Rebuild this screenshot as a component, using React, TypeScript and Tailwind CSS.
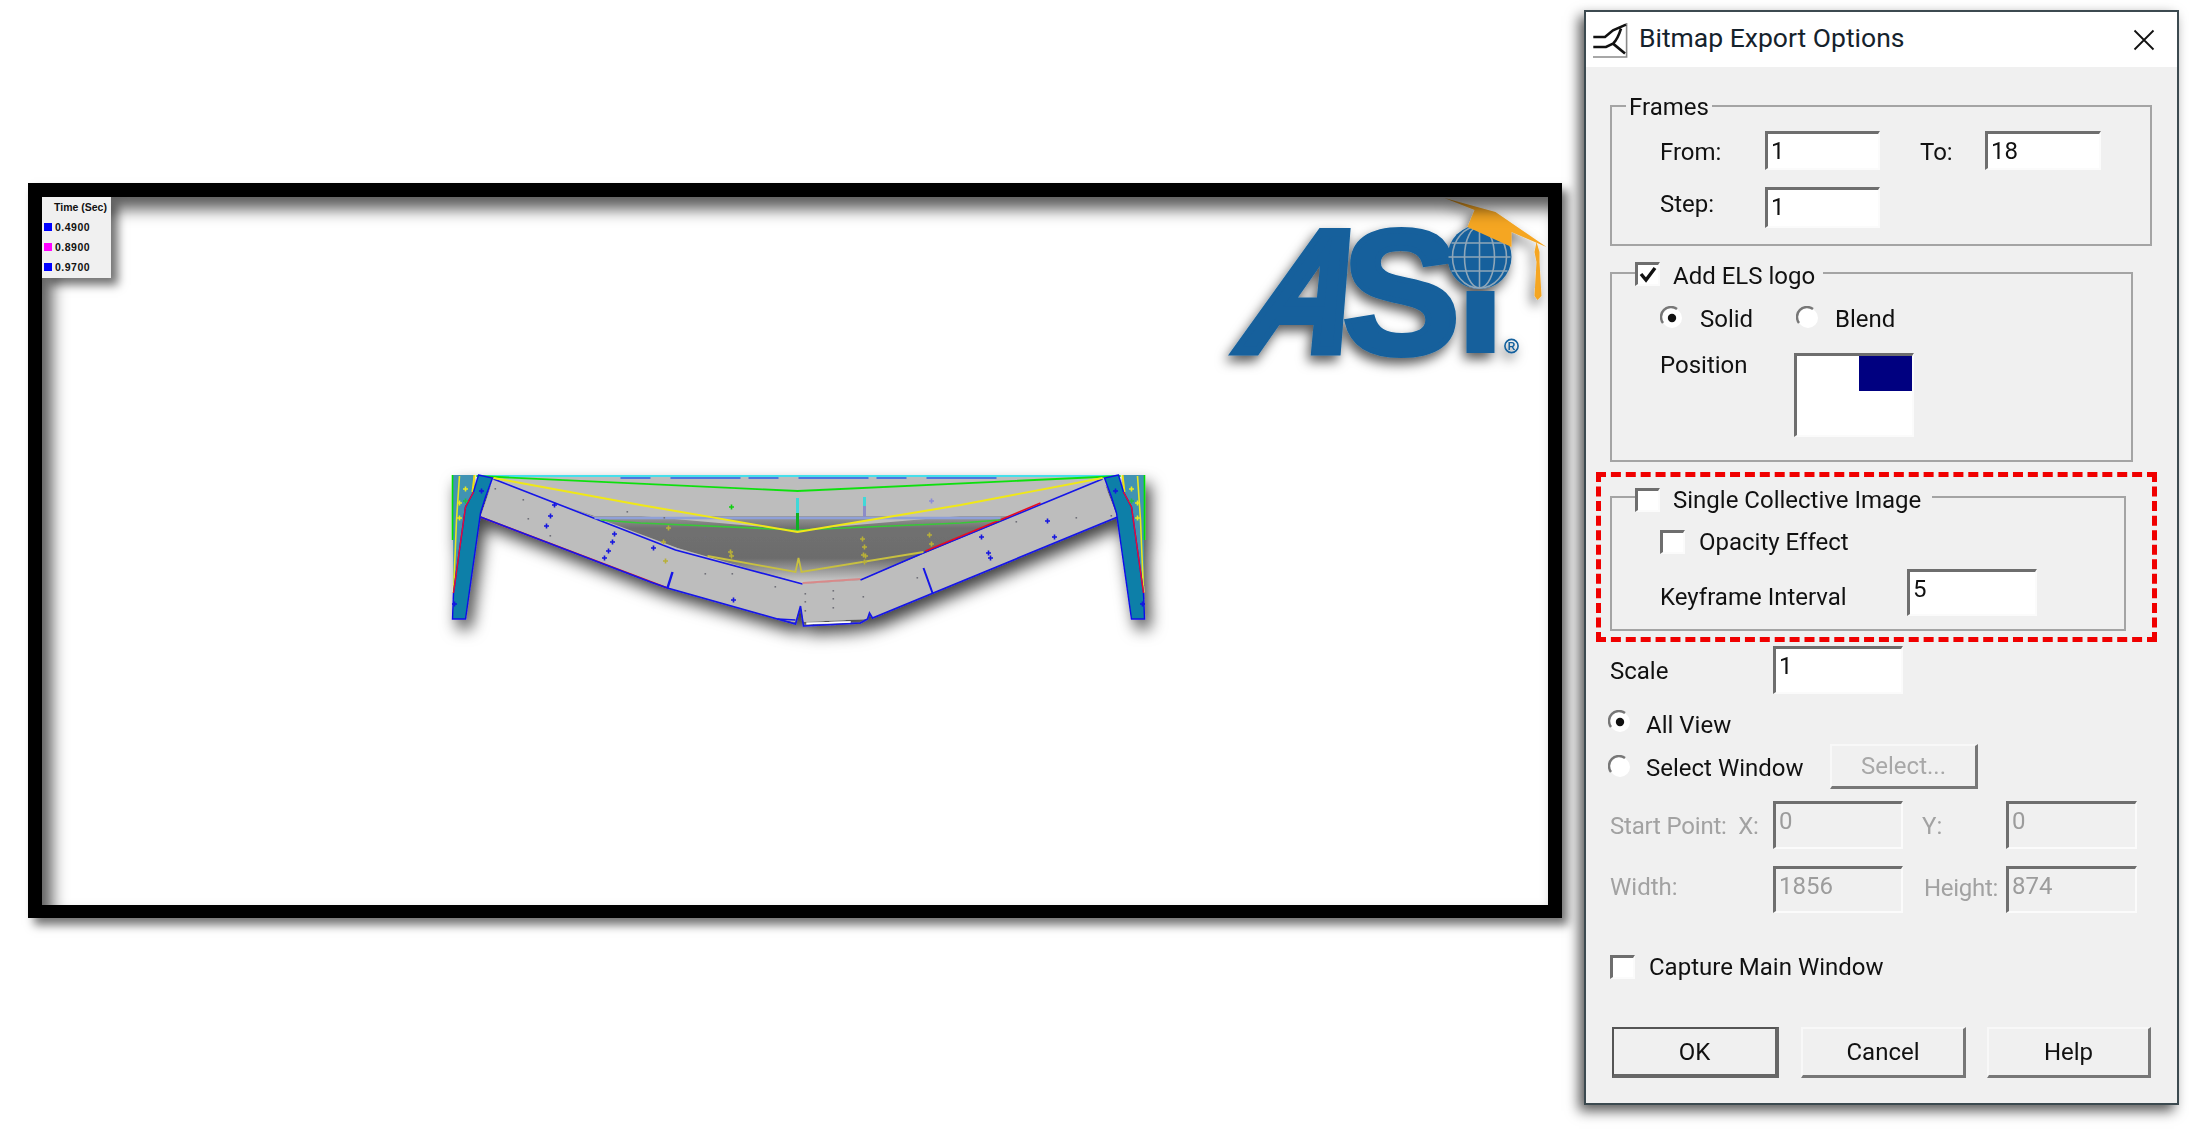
import React from "react";

const sunken = "border-t-[3px] border-l-[3px] border-r-2 border-b-2 border-t-[#6e6e6e] border-l-[#6e6e6e] border-r-[#fbfbfb] border-b-[#fbfbfb]";

function Field({ value, w, h, disabled, className = "" }: { value: string; w: string; h: string; disabled?: boolean; className?: string }) {
  return (
    <div className={`${w} ${h} ${sunken} ${disabled ? "bg-[#f0f0f0] text-[#9c9c9c]" : "bg-white text-[#111]"} pl-[3px] flex items-start shrink-0 leading-[35px] ${className}`}>
      {value}
    </div>
  );
}

function Check({ checked }: { checked?: boolean }) {
  return (
    <div className={`w-[25px] h-[24px] shrink-0 bg-white ${sunken} flex items-center justify-center`}>
      {checked && (
        <svg viewBox="0 0 20 20" className="w-[20px] h-[20px]">
          <path d="M3 9 L8 15 L17 3" fill="none" stroke="#111" strokeWidth="3.4" />
        </svg>
      )}
    </div>
  );
}

function Radio({ on }: { on?: boolean }) {
  return (
    <svg viewBox="0 0 24 24" className="w-[24px] h-[24px] shrink-0">
      <circle cx="12" cy="12" r="10" fill="#fff" />
      <path d="M3 17 A10 10 0 0 1 17 3" fill="none" stroke="#777" strokeWidth="2.4" />
      {on && <circle cx="12" cy="12" r="4.2" fill="#111" />}
    </svg>
  );
}

function Button({ label, w, primary, disabled, h }: { label: string; w: string; h: string; primary?: boolean; disabled?: boolean }) {
  const border = primary
    ? "border-2 border-t-[#555] border-l-[#555] border-r-[4px] border-b-[4px] border-r-[#666] border-b-[#666]"
    : "border-t-2 border-l-2 border-r-[3px] border-b-[3px] border-t-[#f8f8f8] border-l-[#f8f8f8] border-r-[#777] border-b-[#777]";
  return (
    <div className={`${w} ${h} ${border} flex items-center justify-center shrink-0 ${disabled ? "text-[#a8a8a8]" : "text-[#111]"}`}>
      {label}
    </div>
  );
}

function Mark({ x, y, c = "#1414e0" }: { x: number; y: number; c?: string }) {
  return <path d={`M${x - 2.5} ${y} H${x + 2.5} M${x} ${y - 2.5} V${y + 2.5}`} stroke={c} strokeWidth="1.6" />;
}

function Column({ mirror }: { mirror?: boolean }) {
  return (
    <g transform={mirror ? "translate(1596 0) scale(-1 1)" : undefined}>
      <polygon points="452,475 474,475 474,492 465,507 453,593" fill="#3f93b3" />
      <polyline points="452,475 452,540" fill="none" stroke="#00e000" strokeWidth="1.6" />
      <polyline points="459,476 456,520 453,593" fill="none" stroke="#e8e820" strokeWidth="1.6" />
      <polyline points="474,475 472,492" fill="none" stroke="#f0e010" strokeWidth="2" />
      <polygon points="478,475 492,478 485,497 480,513 465,619 452,619 453,593 465,507 473,492" fill="#0a7fa8" stroke="#1010e8" strokeWidth="1.4" />
      <polyline points="473,492 465,507 453,593" fill="none" stroke="#e81030" strokeWidth="1.4" />
      <Mark x={465} y={489} c="#e8e820" />
      <Mark x={459} y={503} c="#e8e820" />
      <Mark x={459} y={518} c="#e8e820" />
      <Mark x={465} y={501} c="#20c040" />
      <Mark x={481} y={491} c="#1414e0" />
      <Mark x={454} y={604} c="#1414e0" />
    </g>
  );
}

function Scene() {
  const blue = [
    [554, 505], [550, 516], [546, 526], [614, 534], [612, 542], [608, 551], [604, 558], [653, 548], [733, 600],
    [1047, 521], [981, 537], [1054, 537], [988, 553], [990, 558],
  ];
  const olive = [
    [668, 528], [663, 542], [665, 561], [730, 552], [731, 556], [862, 539], [864, 547], [863, 555], [864, 562], [865, 556], [929, 535], [931, 544],
  ];
  const dots = [
    [494, 488], [522, 499], [527, 518], [549, 535], [626, 511], [663, 517], [704, 536], [704, 573], [731, 573], [774, 586], [804, 593], [804, 601], [804, 610],
    [832, 590], [832, 598], [832, 607], [862, 596], [1015, 521], [1075, 517], [1110, 515], [916, 577],
  ];
  return (
    <svg viewBox="42 197 1505 708" className="w-full h-full block">
      <defs>
        <filter id="sh" x="-20%" y="-20%" width="140%" height="160%">
          <feDropShadow dx="5" dy="9" stdDeviation="8" floodColor="#000" floodOpacity="0.75" />
        </filter>
        <filter id="shLogo" x="-20%" y="-20%" width="140%" height="140%">
          <feDropShadow dx="-3" dy="6" stdDeviation="6" floodColor="#000" floodOpacity="0.65" />
        </filter>
        <linearGradient id="dark" x1="0" y1="0" x2="0" y2="1">
          <stop offset="0" stopColor="#9a9a9a" />
          <stop offset="0.18" stopColor="#707070" />
          <stop offset="0.62" stopColor="#6c6c6c" />
          <stop offset="0.9" stopColor="#b8b8b8" />
          <stop offset="1" stopColor="#d0d0d0" />
        </linearGradient>
      </defs>

      <g filter="url(#sh)">
        <polygon points="476,477 1120,477 1040,518 600,518" fill="#bdbdbd" />
        <polygon points="590,516 1010,516 925,552 860,580 802,584 677,548" fill="url(#dark)" />
        <polygon points="640,516 797,530 960,516 960,505 797,532 640,505" fill="#bdbdbd" />
        <polygon points="493,479 677,548 802,584 860,580 1102,479 1117,517 872,618 869,613 867,619 803,622 800,606 795,622 777,619 667,588 480,517" fill="#bdbdbd" />
        <polyline points="493,479 675,550 802,584" fill="none" stroke="#1414e8" strokeWidth="1.6" />
        <polyline points="802,583 860,579" fill="none" stroke="#d88a8a" strokeWidth="2" />
        <polyline points="860,580 925,552 1102,479" fill="none" stroke="#1414e8" strokeWidth="1.6" />
        <polyline points="925,551 1040,503" fill="none" stroke="#e81020" strokeWidth="1.6" />
        <polyline points="480,517 667,588" fill="none" stroke="#e81020" strokeWidth="1.6" />
        <polyline points="480,517 650,582 667,588 777,619 795,624 800,606 803,626 860,623 867,619 869,613 872,618 1117,517" fill="none" stroke="#1414e8" strokeWidth="1.6" />
        <polyline points="777,619 795,620 M804,622 866,620" fill="none" stroke="#1414e8" strokeWidth="1.4" />
        <polyline points="806,623.5 850,622" fill="none" stroke="#ffffff" strokeWidth="1.4" />
        <polyline points="667,588 672,572" fill="none" stroke="#1414e8" strokeWidth="2.4" />
        <polyline points="923,568 932,593" fill="none" stroke="#1414e8" strokeWidth="2" />
        <polyline points="476,476 1120,476" fill="none" stroke="#10d8e8" strokeWidth="1.4" />
        <polyline points="476,476 797,491 1120,476" fill="none" stroke="#10e010" strokeWidth="1.8" />
        <polyline points="620,478 1000,478" fill="none" stroke="#2a5ce8" strokeWidth="1.4" strokeDasharray="30 20 70 8" />
        <polyline points="594,518 1000,518" fill="none" stroke="#8fa0d8" strokeWidth="2.4" />
        <polyline points="600,520 640,523 797,530 960,523 1000,520" fill="none" stroke="#38c838" strokeWidth="1.6" />
        <polyline points="493,478 640,505 797,532 960,505 1102,478" fill="none" stroke="#f0e818" strokeWidth="1.8" />
        <polyline points="707,556 795,572 798,558 801,572 923,552" fill="none" stroke="#c8c040" strokeWidth="1.8" />
        <polyline points="797,498 797,530" fill="none" stroke="#40d8d8" strokeWidth="3" />
        <polyline points="797,513 797,530" fill="none" stroke="#10b020" strokeWidth="3" />
        <polyline points="864,497 864,517" fill="none" stroke="#8c8cc8" strokeWidth="3" />
        <polyline points="864,497 864,506" fill="none" stroke="#40d8d8" strokeWidth="3" />
        <Mark x={731} y={507} c="#10d010" />
        <Mark x={931} y={501} c="#8c8cd8" />
        {blue.map(([x, y], i) => <Mark key={i} x={x} y={y} />)}
        {olive.map(([x, y], i) => <Mark key={i} x={x} y={y} c="#b8b038" />)}
        {dots.map(([x, y], i) => <rect key={i} x={x} y={y} width="1.6" height="1.6" fill="#707078" />)}
        <Column />
        <Column mirror />
      </g>

      <g filter="url(#shLogo)">
        <text transform="translate(1231 351) skewX(-21.7) scale(0.86 0.98)" fontFamily="Liberation Sans" fontWeight="700" fontSize="176" fill="#14609c" stroke="#14609c" strokeWidth="9">A</text>
        <text x="1342" y="353" fontFamily="Liberation Sans" fontWeight="700" fontSize="176" fill="#14609c" stroke="#14609c" strokeWidth="6">S</text>
        <rect x="1466" y="291" width="28" height="62" fill="#14609c" />
        <circle cx="1479" cy="257" r="32" fill="#14609c" />
        <g fill="none" stroke="#8fa6b8" strokeWidth="1.6">
          <path d="M1448 257 H1510 M1451 243 H1507 M1451 271 H1507 M1479 226 V288" />
          <ellipse cx="1479" cy="257" rx="15" ry="31" />
          <ellipse cx="1479" cy="257" rx="27" ry="31" />
        </g>
        <polygon points="1444,198 1495,212 1546,247 1511,232 1511,247 1467,227 1474,210" fill="#f5a623" />
        <path d="M1536 242 L1539 252 L1539 262 L1541 296 L1537 300 L1534 296 L1536 262 L1534 252 Z" fill="#f5a623" />
        <circle cx="1511" cy="346" r="6.6" fill="none" stroke="#14609c" strokeWidth="1.6" />
        <text x="1511" y="350" textAnchor="middle" fontFamily="Liberation Sans" fontWeight="700" fontSize="10.5" fill="#14609c">R</text>
      </g>
    </svg>
  );
}

export default function App() {
  return (
    <div className="w-[2189px] h-[1135px] bg-white flex items-start overflow-hidden font-['Roboto',sans-serif] text-[24px] leading-none">
      {/* captured view */}
      <div className="ml-[28px] mt-[183px] w-[1534px] h-[735px] shrink-0 border-[14px] border-b-[13px] border-black shadow-[6px_7px_9px_rgba(0,0,0,0.55)] relative">
        <Scene />
        <div className="absolute inset-0 shadow-[inset_10px_12px_16px_rgba(0,0,0,0.65)] pointer-events-none" />
        <div className="absolute left-0 top-0 w-[69px] h-[81px] bg-[#f0f0f0] shadow-[7px_7px_9px_rgba(0,0,0,0.55)] font-['Liberation_Sans',sans-serif] font-bold text-[10.5px] text-[#111]">
          <div className="flex h-[20px] items-center pl-[12px] whitespace-nowrap">Time (Sec)</div>
          {[["#0000ff", "0.4900"], ["#ff00ff", "0.8900"], ["#0000ff", "0.9700"]].map(([c, t]) => (
            <div key={t} className="flex h-[20px] items-center pl-[2px] gap-[3px] tracking-[0.5px]">
              <span className="w-[8px] h-[8px]" style={{ background: c }} />
              {t}
            </div>
          ))}
        </div>
      </div>

      {/* dialog */}
      <div className="ml-[22px] mt-[10px] w-[595px] h-[1095px] shrink-0 border-2 border-[#3c4a50] bg-[#f0f0f0] shadow-[-5px_6px_12px_rgba(0,0,0,0.65)] text-[#111]">
        <div className="blur-[0.5px]">
          <div className="h-[55px] bg-white flex items-center pl-[6px] pr-[22px]">
            <svg viewBox="0 0 36 36" className="w-[36px] h-[36px] shrink-0">
              <path d="M34.6 1 V35 H1" stroke="#8a8a8a" strokeWidth="1.6" fill="none" />
              <path d="M1.3 15 H13 L21 8.3 L34 2.6 M29 6.6 C27 13 25 18 21 21.6 L33 31.6 M1.3 25 H14 L21 21.6" stroke="#111" strokeWidth="2.6" fill="none" />
            </svg>
            <div className="ml-[11px] flex-1 text-[26.5px] -mt-[3px] text-[#15222c]">Bitmap Export Options</div>
            <svg viewBox="0 0 22 22" className="w-[22px] h-[22px]">
              <path d="M1.5 1.5 L20.5 20.5 M20.5 1.5 L1.5 20.5" stroke="#111" strokeWidth="1.8" />
            </svg>
          </div>

          <div className="pl-[24px]">
            {/* Frames */}
            <div className="relative mt-[38px] w-[542px] h-[141px] border-2 border-[#a4a4a4] pl-[48px] pt-[24px]">
              <div className="absolute left-[14px] top-[-13px] bg-[#f0f0f0] px-[3px] h-[26px] flex items-center">Frames</div>
              <div className="flex items-center">
                <div className="w-[105px] pt-[2px]">From:</div>
                <Field value="1" w="w-[115px]" h="h-[39px]" />
                <div className="ml-[40px] w-[65px] pt-[2px]">To:</div>
                <Field value="18" w="w-[116px]" h="h-[39px]" />
              </div>
              <div className="flex items-center mt-[17px]">
                <div className="w-[105px] pb-[7px]">Step:</div>
                <Field value="1" w="w-[115px]" h="h-[41px]" />
              </div>
            </div>

            {/* Logo */}
            <div className="relative mt-[26px] w-[523px] h-[190px] border-2 border-[#a4a4a4] pl-[48px] pt-[32px]">
              <div className="absolute left-[23px] top-[-12px] bg-[#f0f0f0] pr-[8px] h-[24px] flex items-center gap-[13px]">
                <Check checked />
                <span className="pt-[3px]">Add ELS logo</span>
              </div>
              <div className="flex items-center h-[24px]">
                <Radio on />
                <div className="ml-[16px] w-[96px] pt-[2px]">Solid</div>
                <Radio />
                <div className="ml-[15px] pt-[2px]">Blend</div>
              </div>
              <div className="flex items-start mt-[23px]">
                <div className="w-[134px]">Position</div>
                <div className={`w-[120px] h-[84px] bg-white ${sunken} flex justify-end items-start`}>
                  <div className="w-[53px] h-[35px] bg-[#000080]" />
                </div>
              </div>
            </div>

            {/* Highlighted */}
            <div className="mt-[10px] -ml-[14px] w-[561px] h-[170px] border-[5px] border-dashed border-[#f00000] pl-[9px] pt-[19px]">
              <div className="relative w-[516px] h-[135px] border-2 border-[#a4a4a4] pl-[48px] pt-[32px]">
                <div className="absolute left-[23px] top-[-10px] bg-[#f0f0f0] pr-[11px] h-[24px] flex items-center gap-[13px]">
                  <Check />
                  Single Collective Image
                </div>
                <div className="flex items-center gap-[14px] h-[24px]">
                  <Check />
                  Opacity Effect
                </div>
                <div className="flex items-center mt-[15px]">
                  <div className="w-[247px] pt-[8px]">Keyframe Interval</div>
                  <Field value="5" w="w-[130px]" h="h-[47px]" />
                </div>
              </div>
            </div>

            <div className="flex items-center mt-[4px] h-[48px]">
              <div className="w-[163px] pt-[2px]">Scale</div>
              <Field value="1" w="w-[130px]" h="h-[48px]" />
            </div>

            <div className="flex items-center mt-[14px] h-[28px] -ml-[2px] gap-[14px]">
              <Radio on />
              <span className="pt-[5px]">All View</span>
            </div>
            <div className="flex items-center mt-[8px] h-[45px] -ml-[2px]">
              <Radio />
              <div className="ml-[14px] w-[184px] pt-[2px]">Select Window</div>
              <Button label="Select..." w="w-[148px]" h="h-[45px]" disabled />
            </div>

            <div className="flex items-center mt-[12px] h-[48px] text-[#a2a2a2]">
              <div className="w-[163px] whitespace-nowrap pt-[2px] tracking-[-0.2px]">Start Point:&nbsp; X:</div>
              <Field value="0" w="w-[130px]" h="h-[48px]" disabled />
              <div className="ml-[19px] w-[84px] pt-[2px]">Y:</div>
              <Field value="0" w="w-[131px]" h="h-[48px]" disabled />
            </div>
            <div className="flex items-center mt-[17px] h-[47px] text-[#a2a2a2]">
              <div className="w-[163px] pb-[5px]">Width:</div>
              <Field value="1856" w="w-[130px]" h="h-[47px]" disabled />
              <div className="ml-[21px] w-[82px] pb-[3px] tracking-[-0.3px]">Height:</div>
              <Field value="874" w="w-[131px]" h="h-[47px]" disabled />
            </div>

            <div className="flex items-center mt-[42px] h-[24px] gap-[14px]">
              <Check />
              Capture Main Window
            </div>

            <div className="flex mt-[48px] ml-[2px]">
              <Button label="OK" w="w-[167px]" h="h-[51px]" primary />
              <div className="ml-[22px]">
                <Button label="Cancel" w="w-[165px]" h="h-[51px]" />
              </div>
              <div className="ml-[21px]">
                <Button label="Help" w="w-[164px]" h="h-[51px]" />
              </div>
            </div>
          </div>
        </div>
      </div>
    </div>
  );
}
